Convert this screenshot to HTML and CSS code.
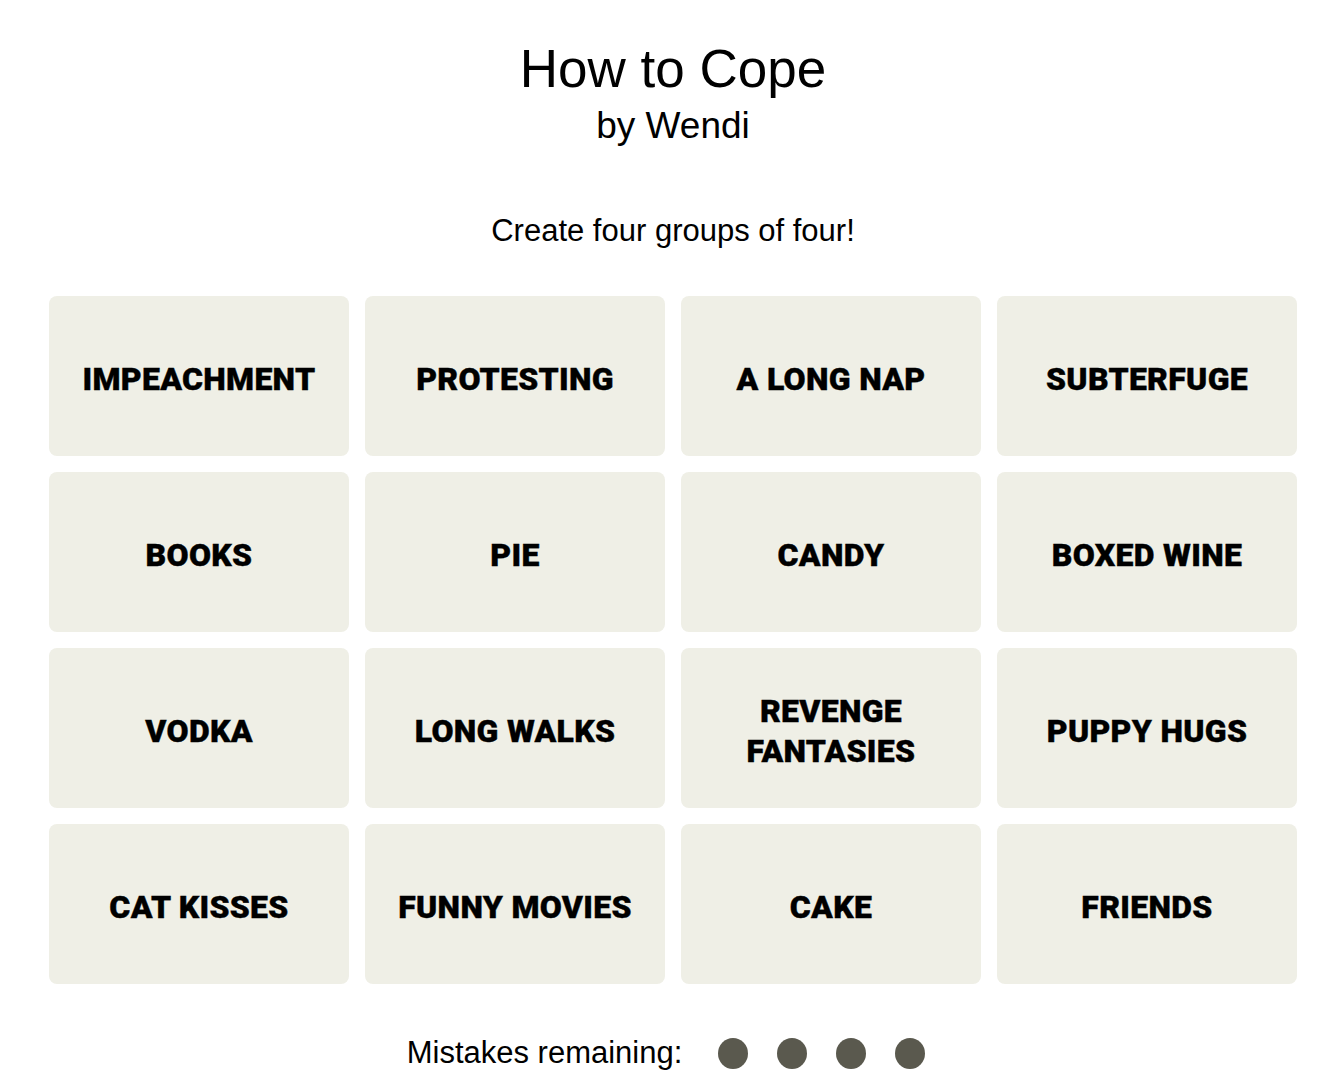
FILE: index.html
```html
<!DOCTYPE html>
<html lang="en">
<head>
<meta charset="utf-8">
<title>How to Cope</title>
<link rel="stylesheet" href="styles.css">
</head>
<body>
<main class="game">
  <header class="head">
    <h1 class="title">How to Cope</h1>
    <p class="author">by Wendi</p>
  </header>
  <p class="prompt">Create four groups of four!</p>
  <section class="board">
    <button class="tile">IMPEACHMENT</button>
    <button class="tile">PROTESTING</button>
    <button class="tile">A LONG NAP</button>
    <button class="tile">SUBTERFUGE</button>
    <button class="tile">BOOKS</button>
    <button class="tile">PIE</button>
    <button class="tile">CANDY</button>
    <button class="tile">BOXED WINE</button>
    <button class="tile">VODKA</button>
    <button class="tile">LONG WALKS</button>
    <button class="tile">REVENGE<br>FANTASIES</button>
    <button class="tile">PUPPY HUGS</button>
    <button class="tile">CAT KISSES</button>
    <button class="tile">FUNNY MOVIES</button>
    <button class="tile">CAKE</button>
    <button class="tile">FRIENDS</button>
  </section>
  <div class="mistakes">
    <span class="mistakes-label">Mistakes remaining:</span>
    <span class="dots">
      <span class="dot"></span><span class="dot"></span><span class="dot"></span><span class="dot"></span>
    </span>
  </div>
</main>
</body>
</html>
```
FILE: styles.css
```css
html, body {
  margin: 0;
  background: #ffffff;
}
body {
  padding: 0 0 0 8px;
  font-family: "Liberation Sans", Arial, sans-serif;
  color: #000;
}
.game {
  width: 1248px;
  margin: 0 auto;
  display: flex;
  flex-direction: column;
  align-items: center;
}
.head {
  display: flex;
  flex-direction: column;
  align-items: center;
  margin-top: 37px;
}
.title {
  margin: 0;
  font-size: 53px;
  line-height: 64px;
  font-weight: 400;
}
.author {
  margin: 3px 0 0;
  font-size: 37px;
  line-height: 44px;
}
.prompt {
  margin: 65px 0 0;
  font-size: 31px;
  line-height: 36px;
}
.board {
  margin-top: 47px;
  display: grid;
  grid-template-columns: repeat(4, 300px);
  grid-auto-rows: 160px;
  gap: 16px;
}
.tile {
  border: 0;
  padding: 5px 0 0;
  margin: 0;
  background: #efefe6;
  border-radius: 8px;
  font-family: "Roboto", "Liberation Sans", sans-serif;
  font-weight: 900;
  font-size: 32px;
  line-height: 40px;
  letter-spacing: 0.3px;
  color: #000;
  -webkit-text-stroke: 0.4px #000;
  text-align: center;
}
.mistakes {
  margin-top: 51px;
  padding-right: 14px;
  display: flex;
  align-items: center;
  gap: 36px;
  font-size: 31px;
  line-height: 36px;
}
.dots {
  display: flex;
  gap: 29px;
}
.dot {
  width: 30px;
  height: 31px;
  border-radius: 50%;
  background: #5a594e;
}
```
